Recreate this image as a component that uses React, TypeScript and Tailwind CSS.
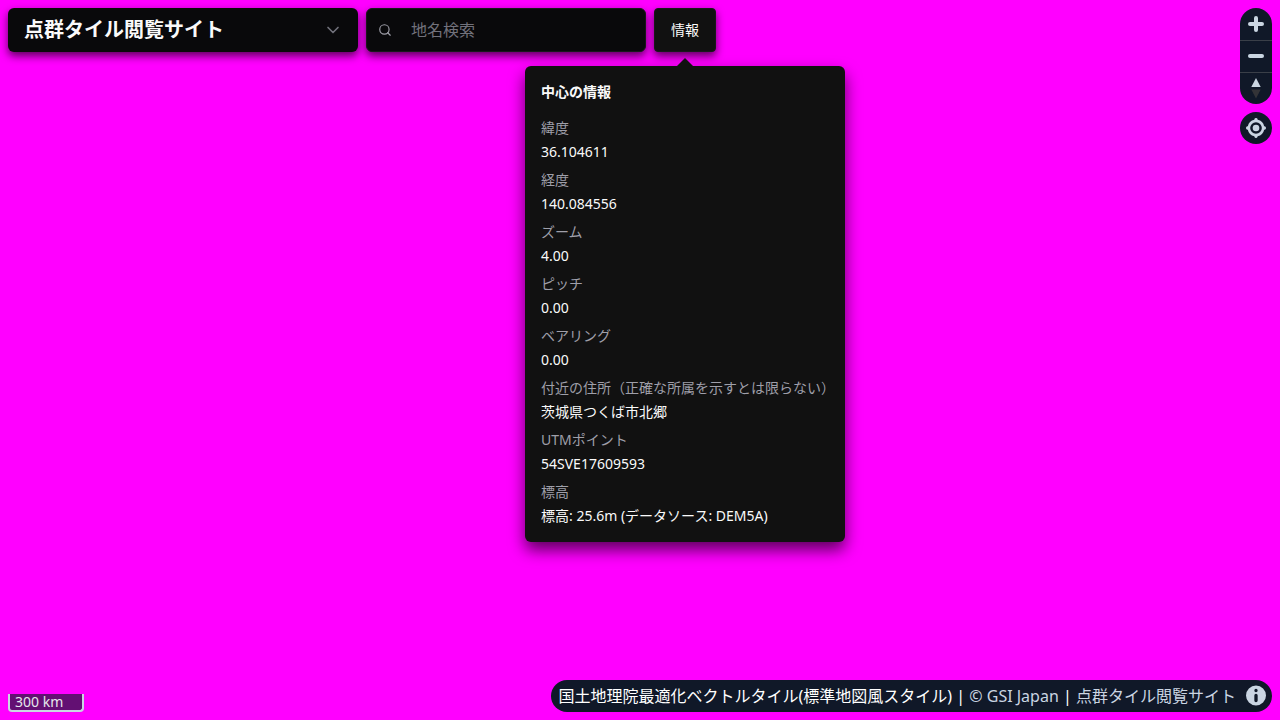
const details = [
  { label: "緯度", value: "36.104611" },
  { label: "経度", value: "140.084556" },
  { label: "ズーム", value: "4.00" },
  { label: "ピッチ", value: "0.00" },
  { label: "ベアリング", value: "0.00" },
  { label: "付近の住所（正確な所属を示すとは限らない）", value: "茨城県つくば市北郷" },
  { label: "UTMポイント", value: "54SVE17609593" },
  { label: "標高", value: "標高: 25.6m (データソース: DEM5A)" },
];

function InfoPopover() {
  return (
    <div
      role="dialog"
      aria-labelledby="info-title"
      className="absolute top-full left-1/2 mt-3.5 w-80 -translate-x-1/2 rounded-md bg-[#111111] p-4 text-sm text-zinc-50 shadow-[0_8px_16px_rgba(0,0,0,0.64)]"
    >
      <svg
        aria-hidden="true"
        viewBox="0 0 16 8"
        className="absolute bottom-full left-1/2 h-2 w-4 -translate-x-1/2 fill-[#111111]"
      >
        <path d="M0 8 8 0l8 8z" />
      </svg>
      <h2 id="info-title" className="mb-4 font-semibold">
        中心の情報
      </h2>
      <dl className="flex flex-col gap-2">
        {details.map((d) => (
          <div key={d.label} className="flex flex-col gap-1">
            <dt className="text-zinc-400">{d.label}</dt>
            <dd>{d.value}</dd>
          </div>
        ))}
      </dl>
    </div>
  );
}

function Header() {
  return (
    <header className="flex gap-2">
      <button
        type="button"
        className="flex h-11 w-[350px] items-center justify-between rounded-md bg-zinc-950 pr-[15px] pl-4 text-xl font-semibold text-zinc-50 shadow-[0_4px_8px_rgba(0,0,0,0.64)]"
      >
        点群タイル閲覧サイト
        <svg
          aria-hidden="true"
          viewBox="0 0 24 24"
          className="size-5 fill-none stroke-zinc-500 stroke-2"
          strokeLinecap="round"
          strokeLinejoin="round"
        >
          <path d="m6 9 6 6 6-6" />
        </svg>
      </button>
      <label className="flex h-11 w-[280px] items-center rounded-md border border-zinc-900 bg-zinc-950 shadow-[0_4px_8px_rgba(0,0,0,0.64)]">
        <svg
          aria-hidden="true"
          viewBox="0 0 24 24"
          className="ml-[11px] size-3.5 fill-none stroke-zinc-400 stroke-2"
          strokeLinecap="round"
        >
          <circle cx="11" cy="11" r="8" />
          <path d="m21 21-4.300-4.300" />
        </svg>
        <input
          type="text"
          aria-label="地名検索"
          placeholder="地名検索"
          className="ml-[19px] min-w-0 flex-1 bg-transparent text-base text-zinc-50 outline-none placeholder:text-zinc-500"
        />
      </label>
      <div className="relative">
        <button
          type="button"
          className="h-11 rounded-sm border border-[#18181b] bg-[#111111] px-4 text-sm text-zinc-50 shadow-[0_4px_8px_rgba(0,0,0,0.64)]"
        >
          情報
        </button>
        <InfoPopover />
      </div>
    </header>
  );
}

function MapControls() {
  return (
    <div className="flex flex-col gap-2">
      <div className="flex flex-col overflow-hidden rounded-full bg-gray-900">
        <button type="button" aria-label="ズームイン" className="size-8">
          <svg viewBox="0 0 32 32" className="size-8 fill-none stroke-slate-300 stroke-4" strokeLinecap="round">
            <path d="M16 10v12M10 16h12" />
          </svg>
        </button>
        <button
          type="button"
          aria-label="ズームアウト"
          className="size-8 border-t border-[#3a3f48]"
        >
          <svg viewBox="0 1 32 31" className="h-[31px] w-8 fill-none stroke-slate-300 stroke-4" strokeLinecap="round">
            <path d="M10 16h12" />
          </svg>
        </button>
        <button
          type="button"
          aria-label="北を上にする"
          className="size-8 border-t border-[#3a3f48]"
        >
          <svg viewBox="0 1 32 31" className="h-[31px] w-8">
            <path className="fill-slate-300" d="m11.300 15 4.700-9 4.700 9z" />
            <path className="fill-[#333337]" d="m11.300 17.500 4.700 9 4.700-9z" />
          </svg>
        </button>
      </div>
      <button type="button" aria-label="現在地" className="size-8 rounded-full bg-gray-900">
        <svg viewBox="0.400 0.400 19.200 19.200" className="size-8 fill-slate-300">
          <path d="M10 4C9 4 9 5 9 5v.1A5 5 0 0 0 5.100 9H5s-1 0-1 1 1 1 1 1h.1A5 5 0 0 0 9 14.900v.1s0 1 1 1 1-1 1-1v-.1a5 5 0 0 0 3.900-3.900h.1s1 0 1-1-1-1-1-1h-.1A5 5 0 0 0 11 5.100V5s0-1-1-1zm0 2.500a3.500 3.500 0 1 1 0 7 3.500 3.500 0 1 1 0-7z" />
          <circle cx="10" cy="10" r="2" />
        </svg>
      </button>
    </div>
  );
}

export default function App() {
  return (
    <main
      lang="ja"
      className="flex min-h-screen flex-col justify-between bg-[#ff00ff] font-['Noto_Sans','Noto_Sans_CJK_JP',sans-serif] leading-normal"
    >
      <div className="flex items-start justify-between p-2">
        <Header />
        <MapControls />
      </div>
      <footer className="flex items-end justify-between p-2">
        <div className="flex h-[18px] w-[76px] items-center rounded-b-sm border-2 border-t-0 border-slate-300 bg-gray-900/65 px-[5px] text-sm text-gray-200">
          300 km
        </div>
        <div className="flex h-8 items-center rounded-full bg-gray-900 pl-2 text-base text-white">
          <p className="whitespace-pre">
            国土地理院最適化ベクトルタイル(標準地図風スタイル) |{" "}
            <a href="#gsi" className="text-slate-300">
              © GSI Japan
            </a>{" "}
            |{" "}
            <a href="#site" className="text-slate-300">
              点群タイル閲覧サイト
            </a>
          </p>
          <button type="button" aria-label="帰属表示" className="ml-1 size-8">
            <svg viewBox="0.400 0.700 19.200 19.200" className="size-8 fill-slate-300" fillRule="evenodd">
              <path d="M4 10a6 6 0 1 0 12 0 6 6 0 1 0-12 0m5-3a1 1 0 1 0 2 0 1 1 0 1 0-2 0m0 3a1 1 0 1 1 2 0v3a1 1 0 1 1-2 0" />
            </svg>
          </button>
        </div>
      </footer>
    </main>
  );
}
